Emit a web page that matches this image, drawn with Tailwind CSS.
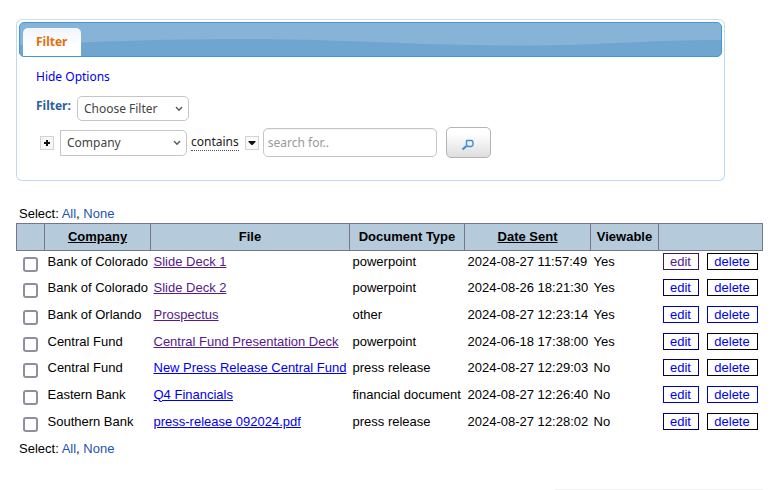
<!DOCTYPE html>
<html lang="en">
<head>
    <meta charset="UTF-8">
    <meta name="viewport" content="width=device-width, initial-scale=1.0">
    <title>Files</title>
    <script src="https://cdn.jsdelivr.net/npm/@tailwindcss/browser@4"></script>
</head>
<body class="bg-white font-['Liberation_Sans',Arial,sans-serif] text-[13px] leading-5 text-black">
    <main class="pt-[19px] pr-[17px] pl-4">

        <!-- Filter panel -->
        <section class="w-[709px] max-w-full rounded-md border border-[#c0dbf1] border-t-[#d3dbe3] p-0.5 font-['Noto_Sans',sans-serif] text-xs leading-5">
            <div class="relative flex h-[35px] items-end overflow-hidden rounded-[5px] border border-[#4297d7] bg-[#6ea6d0] pl-[3px]">
                <svg class="absolute inset-0 h-full w-full" viewBox="0 0 702 33" preserveAspectRatio="none" aria-hidden="true">
                    <path d="M0 22C70 19 140 16 220 16C330 16 390 22.500 500 22.500C580 22.500 630 17 702 17V0H0Z" fill="#87b3d7"/>
                </svg>
                <a href="#filter" class="relative -mb-px h-[29px] rounded-t-[5px] bg-linear-to-b from-[#f0f5fb] to-white to-60% px-[13px] pt-1 font-bold text-[#e17009]">Filter</a>
            </div>

            <div id="filter" class="px-[17px] pt-[10px] pb-5">
                <a href="#options" class="text-[#0000ee]">Hide Options</a>

                <div id="options">
                    <div class="mt-[9px] flex items-start gap-1.5">
                        <label for="saved-filter" class="font-bold text-[#2e5e9e]">Filter:</label>
                        <div class="relative">
                            <select id="saved-filter" class="h-[25px] w-28 appearance-none rounded-[5px] border border-[#c5c5c5] bg-white pl-1.5 text-[#444]">
                                <option>Choose Filter</option>
                            </select>
                            <svg class="pointer-events-none absolute top-[10px] right-[6px] h-[6px] w-2" viewBox="0 0 8 6" fill="none" stroke="#555" stroke-width="1.300" aria-hidden="true"><path d="M1 1l3 3.200L7 1"/></svg>
                        </div>
                    </div>

                    <div class="mt-1.5 flex items-center pl-1">
                        <button type="button" aria-label="Add condition" class="flex size-[14px] items-center justify-center border border-[#d3d3d3] bg-[#f6f6f6]">
                            <svg class="size-2" viewBox="0 0 8 8" fill="#111" aria-hidden="true"><path d="M3 1h2v2h2v2H5v2H3V5H1V3h2z"/></svg>
                        </button>
                        <div class="relative ml-1.5">
                            <select aria-label="Field" class="h-[26px] w-[127px] appearance-none rounded-r-[5px] border border-[#c5c5c5] bg-white pl-1.5 text-[#444]">
                                <option>Company</option>
                            </select>
                            <svg class="pointer-events-none absolute top-[10px] right-[6px] h-[6px] w-2" viewBox="0 0 8 6" fill="none" stroke="#555" stroke-width="1.300" aria-hidden="true"><path d="M1 1l3 3.200L7 1"/></svg>
                        </div>
                        <label for="search" class="ml-1 border-b border-dotted border-[#555] leading-4 text-[#222]">contains</label>
                        <button type="button" aria-label="Change operator" class="ml-1.5 flex size-[14px] items-center justify-center border border-[#d3d3d3] bg-[#fafafa]">
                            <svg class="size-2" viewBox="0 0 8 8" fill="#111" aria-hidden="true"><path d="M.500 2h7v1L4.500 6h-1L.500 3z"/></svg>
                        </button>
                        <input id="search" type="text" placeholder="search for.." class="ml-1 h-[29px] w-[174px] rounded-[5px] border border-[#c5c5c5] px-1 inset-shadow-xs placeholder:text-[#999]">
                        <button type="button" aria-label="Search" class="ml-[9px] flex h-[31px] w-[45px] items-center justify-center rounded-[5px] border border-[#b5b5b5] bg-linear-to-b from-white from-20% via-[#f2f2f2] via-50% to-[#dedede]">
                            <svg class="mt-1 size-3" viewBox="0 0 12 12" fill="none" stroke="#3d8fdb" aria-hidden="true">
                                <path d="M5 1.500h5L11 3v3L9.500 7.500H6L4.500 6V2z" stroke-width="1.400"/>
                                <path d="M4.500 7L.500 10.500" stroke-width="2.200"/>
                            </svg>
                        </button>
                    </div>
                </div>
            </div>
        </section>

        <!-- File list -->
        <div class="mt-[23px] pl-[3px] leading-[19px]">Select: <a href="#" class="text-[#1c54b0]">All</a>, <a href="#" class="text-[#1c54b0]">None</a></div>

        <table class="w-full table-fixed border-collapse whitespace-nowrap">
            <colgroup>
                <col class="w-7">
                <col class="w-[106px]">
                <col class="w-[199px]">
                <col class="w-[115px]">
                <col class="w-[126px]">
                <col class="w-[68px]">
                <col>
            </colgroup>
            <thead class="bg-[#b5cada] [&_th]:h-[27px] [&_th]:border [&_th]:border-[#75758d] [&_th]:p-0">
                <tr>
                    <th></th>
                    <th><a href="#" class="underline">Company</a></th>
                    <th>File</th>
                    <th>Document Type</th>
                    <th><a href="#" class="underline">Date Sent</a></th>
                    <th>Viewable</th>
                    <th></th>
                </tr>
            </thead>
            <tbody id="files" class="align-top [&_td]:py-px [&_td]:pr-0 [&_td]:pl-[3px] [&>tr]:h-[27px] [&>tr:nth-child(3n+1)]:h-[26px]"></tbody>
        </table>

        <div class="mt-0.5 pl-[3px] leading-[19px]">Select: <a href="#" class="text-[#1c54b0]">All</a>, <a href="#" class="text-[#1c54b0]">None</a></div>

        <hr class="mt-[31px] ml-auto w-52 border-[#f3f3f3]">
    </main>

    <script>
        const VISITED = 'text-[#551a8b]';
        const LINK = 'text-[#0000ee]';

        // company, file, type, sent, viewable, file link, edit link, edit border, delete border
        const files = [
            ['Bank of Colorado', 'Slide Deck 1', 'powerpoint', '2024-08-27 11:57:49', 'Yes', VISITED, VISITED, 'border-[#3b1a5b]', 'border-black'],
            ['Bank of Colorado', 'Slide Deck 2', 'powerpoint', '2024-08-26 18:21:30', 'Yes', VISITED, LINK, 'border-[#000066]', 'border-black'],
            ['Bank of Orlando', 'Prospectus', 'other', '2024-08-27 12:23:14', 'Yes', VISITED, LINK, 'border-[#0000cc]', 'border-[#0000cc]'],
            ['Central Fund', 'Central Fund Presentation Deck', 'powerpoint', '2024-06-18 17:38:00', 'Yes', VISITED, LINK, 'border-[#000066]', 'border-black'],
            ['Central Fund', 'New Press Release Central Fund', 'press release', '2024-08-27 12:29:03', 'No', LINK, LINK, 'border-[#000066]', 'border-black'],
            ['Eastern Bank', 'Q4 Financials', 'financial document', '2024-08-27 12:26:40', 'No', LINK, LINK, 'border-[#0000cc]', 'border-[#0000cc]'],
            ['Southern Bank', 'press-release 092024.pdf', 'press release', '2024-08-27 12:28:02', 'No', LINK, LINK, 'border-[#000066]', 'border-black']
        ];

        document.getElementById('files').innerHTML = files.map(([company, file, type, sent, viewable, fileLink, editLink, editBorder, deleteBorder]) => `
            <tr>
                <td><input type="checkbox" aria-label="Select ${file}" class="mt-[5px] ml-[3px] block size-[15px] appearance-none rounded-[3px] border-2 border-[#8f8f9d] bg-white"></td>
                <td>${company}</td>
                <td><a href="#" class="underline ${fileLink}">${file}</a></td>
                <td>${type}</td>
                <td>${sent}</td>
                <td>${viewable}</td>
                <td>
                    <div class="flex gap-2 pt-px pl-px leading-[15px]">
                        <a href="#" class="w-9 border text-center ${editLink} ${editBorder}">edit</a>
                        <a href="#" class="w-[51px] border text-center text-[#0000ee] ${deleteBorder}">delete</a>
                    </div>
                </td>
            </tr>`).join('');
    </script>
</body>
</html>
